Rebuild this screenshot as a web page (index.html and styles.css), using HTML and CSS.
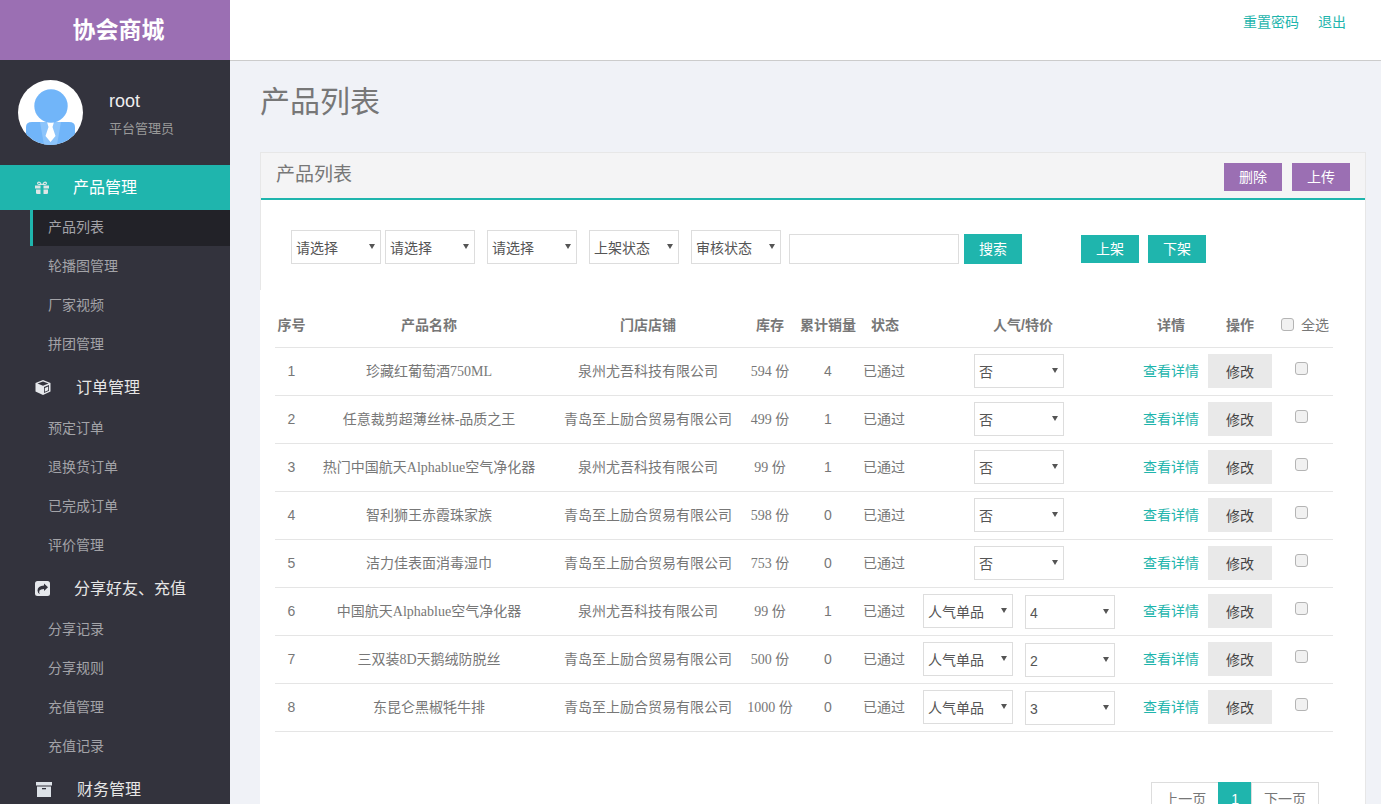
FILE: index.html
```html
<!DOCTYPE html>
<html lang="zh-CN">
<head>
    <meta charset="UTF-8">
    <title>产品列表</title>
    <link rel="stylesheet" href="styles.css">
</head>
<body>
    <div class="app">
        <!-- Sidebar -->
        <div class="sidebar">
            <div class="logo">协会商城</div>
            <div class="profile">
                <svg class="avatar" viewBox="0 0 65 65">
                    <defs><clipPath id="round"><circle cx="32.5" cy="32.5" r="32.5"/></clipPath></defs>
                    <circle cx="32.5" cy="32.5" r="32.5" fill="#fff"/>
                    <g clip-path="url(#round)">
                        <path d="M8 47q0-5 6-5h37q6 0 6 5v18H8z" fill="#71b5f9"/>
                        <path d="M22 42h21l-4 23H26z" fill="#8cc4fb"/>
                        <path d="M29 42h7l-1.500 5 3 9-5 6-5-6 3-9z" fill="#fff"/>
                    </g>
                    <circle cx="33" cy="26" r="16.700" fill="#71b5f9"/>
                </svg>
                <div class="profile-info">
                    <div class="profile-name">root</div>
                    <div class="profile-role">平台管理员</div>
                </div>
            </div>
            <ul class="menu">
                <li class="menu-head active">
                    <svg class="icon icon-gift" viewBox="0 0 14 14"><path d="M0 4.500h14v3H8.500v-3h-3v3H0zM1 8.500h4.500V13H2.500Q1 13 1 12zM8.500 8.500H13V12q0 1-1.500 1h-3zM4 .5q-2 0-2 1.700T4 4h6q2 0 2-1.800T10 .5Q8.500.5 7 3.500 5.500.5 4 .5z" fill="#dfe6e6" fill-rule="evenodd"/><path d="M4 1.800q-.8 0-.8.6t.8.6h1.500zM10 1.800q.8 0 .8.6t-.8.6H8.500z" fill="#1fb5ad"/></svg>
                    <span>产品管理</span>
                </li>
                <li class="menu-item current">产品列表</li>
                <li class="menu-item">轮播图管理</li>
                <li class="menu-item">厂家视频</li>
                <li class="menu-item tight">拼团管理</li>
                <li class="menu-head">
                    <svg class="icon icon-cube" viewBox="0 0 16 15"><path d="M8 0l7.500 3v8.500L8 15 .5 11.500V3z" fill="#e6e8ec"/><path d="M2.500 3.600L8 1.500l5.500 2.100L8 5.800zM9 7v6l5-2.300V5z" fill="#33333d"/><path d="M9.800 8l3.400-1.500v3.700l-3.400 1.600z" fill="#e6e8ec"/></svg>
                    <span>订单管理</span>
                </li>
                <li class="menu-item">预定订单</li>
                <li class="menu-item">退换货订单</li>
                <li class="menu-item">已完成订单</li>
                <li class="menu-item">评价管理</li>
                <li class="menu-head">
                    <svg class="icon icon-share" viewBox="0 0 15 15"><path d="M2.500 0h10Q15 0 15 2.500v10q0 2.500-2.500 2.500h-10Q0 15 0 12.500v-10Q0 0 2.500 0z" fill="#e6e8ec"/><path d="M9 2.500l4 3.700-4 3.800V8Q5.500 8 4.500 9.500 3.500 11.500 5 13 2.500 12 2.500 9.500q0-4.500 6.500-5z" fill="#33333d"/></svg>
                    <span>分享好友、充值</span>
                </li>
                <li class="menu-item">分享记录</li>
                <li class="menu-item">分享规则</li>
                <li class="menu-item">充值管理</li>
                <li class="menu-item">充值记录</li>
                <li class="menu-head">
                    <svg class="icon icon-archive" viewBox="0 0 16 15"><path d="M0 0h16v3.500H0zM1 4.500h14V15H1z" fill="#dde2e8"/><rect x="6" y="6" width="4" height="1.300" fill="#33333d"/></svg>
                    <span>财务管理</span>
                </li>
            </ul>
        </div>

        <!-- Main Content -->
        <div class="main">
            <div class="topbar">
                <a href="#">重置密码</a>
                <a href="#">退出</a>
            </div>
            <div class="content">
                <h1 class="page-title">产品列表</h1>
                <div class="panel">
                    <div class="panel-head">
                        <h2>产品列表</h2>
                        <div class="panel-actions">
                            <button class="btn btn-purple">删除</button>
                            <button class="btn btn-purple">上传</button>
                        </div>
                    </div>
                    <div class="filters">
                        <select class="field"><option>请选择</option></select>
                        <select class="field gap-s"><option>请选择</option></select>
                        <select class="field gap-m"><option>请选择</option></select>
                        <select class="field gap-m"><option>上架状态</option></select>
                        <select class="field gap-m"><option>审核状态</option></select>
                        <input type="text" class="search-input">
                        <button class="btn btn-teal btn-search">搜索</button>
                        <button class="btn btn-teal btn-on">上架</button>
                        <button class="btn btn-teal btn-off">下架</button>
                    </div>
                    <div class="table-wrap">
                        <table>
                            <colgroup>
                                <col class="c-no"><col class="c-name"><col class="c-shop"><col class="c-stock"><col class="c-sales"><col class="c-state"><col class="c-hot"><col class="c-detail"><col class="c-op"><col class="c-check">
                            </colgroup>
                            <thead>
                                <tr>
                                    <th>序号</th>
                                    <th>产品名称</th>
                                    <th>门店店铺</th>
                                    <th>库存</th>
                                    <th>累计销量</th>
                                    <th>状态</th>
                                    <th>人气/特价</th>
                                    <th>详情</th>
                                    <th>操作</th>
                                    <th class="check-all"><input type="checkbox"><span>全选</span></th>
                                </tr>
                            </thead>
                            <tbody>
                                <tr>
                                    <td>1</td><td>珍藏红葡萄酒750ML</td><td>泉州尤吾科技有限公司</td><td>594 份</td><td>4</td><td>已通过</td>
                                    <td><div class="hot-pair"><select class="field"><option>否</option></select></div></td>
                                    <td><a href="#">查看详情</a></td><td><button class="btn btn-edit">修改</button></td><td class="row-check"><input type="checkbox"></td>
                                </tr>
                                <tr>
                                    <td>2</td><td>任意裁剪超薄丝袜-品质之王</td><td>青岛至上励合贸易有限公司</td><td>499 份</td><td>1</td><td>已通过</td>
                                    <td><div class="hot-pair"><select class="field"><option>否</option></select></div></td>
                                    <td><a href="#">查看详情</a></td><td><button class="btn btn-edit">修改</button></td><td class="row-check"><input type="checkbox"></td>
                                </tr>
                                <tr>
                                    <td>3</td><td>热门中国航天Alphablue空气净化器</td><td>泉州尤吾科技有限公司</td><td>99 份</td><td>1</td><td>已通过</td>
                                    <td><div class="hot-pair"><select class="field"><option>否</option></select></div></td>
                                    <td><a href="#">查看详情</a></td><td><button class="btn btn-edit">修改</button></td><td class="row-check"><input type="checkbox"></td>
                                </tr>
                                <tr>
                                    <td>4</td><td>智利狮王赤霞珠家族</td><td>青岛至上励合贸易有限公司</td><td>598 份</td><td>0</td><td>已通过</td>
                                    <td><div class="hot-pair"><select class="field"><option>否</option></select></div></td>
                                    <td><a href="#">查看详情</a></td><td><button class="btn btn-edit">修改</button></td><td class="row-check"><input type="checkbox"></td>
                                </tr>
                                <tr>
                                    <td>5</td><td>洁力佳表面消毒湿巾</td><td>青岛至上励合贸易有限公司</td><td>753 份</td><td>0</td><td>已通过</td>
                                    <td><div class="hot-pair"><select class="field"><option>否</option></select></div></td>
                                    <td><a href="#">查看详情</a></td><td><button class="btn btn-edit">修改</button></td><td class="row-check"><input type="checkbox"></td>
                                </tr>
                                <tr>
                                    <td>6</td><td>中国航天Alphablue空气净化器</td><td>泉州尤吾科技有限公司</td><td>99 份</td><td>1</td><td>已通过</td>
                                    <td><div class="hot-pair"><select class="field"><option>人气单品</option></select><select class="field field-low"><option>4</option></select></div></td>
                                    <td><a href="#">查看详情</a></td><td><button class="btn btn-edit">修改</button></td><td class="row-check"><input type="checkbox"></td>
                                </tr>
                                <tr>
                                    <td>7</td><td>三双装8D天鹅绒防脱丝</td><td>青岛至上励合贸易有限公司</td><td>500 份</td><td>0</td><td>已通过</td>
                                    <td><div class="hot-pair"><select class="field"><option>人气单品</option></select><select class="field field-low"><option>2</option></select></div></td>
                                    <td><a href="#">查看详情</a></td><td><button class="btn btn-edit">修改</button></td><td class="row-check"><input type="checkbox"></td>
                                </tr>
                                <tr>
                                    <td>8</td><td>东昆仑黑椒牦牛排</td><td>青岛至上励合贸易有限公司</td><td>1000 份</td><td>0</td><td>已通过</td>
                                    <td><div class="hot-pair"><select class="field"><option>人气单品</option></select><select class="field field-low"><option>3</option></select></div></td>
                                    <td><a href="#">查看详情</a></td><td><button class="btn btn-edit">修改</button></td><td class="row-check"><input type="checkbox"></td>
                                </tr>
                            </tbody>
                        </table>
                        <div class="pager">
                            <a href="#">上一页</a>
                            <a href="#" class="on">1</a>
                            <a href="#">下一页</a>
                        </div>
                    </div>
                </div>
            </div>
        </div>
    </div>
</body>
</html>
```

FILE: styles.css
```css
* {
    margin: 0;
    padding: 0;
    box-sizing: border-box;
}

html, body {
    height: 804px;
    overflow: hidden;
}

body {
    background-color: #f0f2f7;
    color: #777;
    font-family: "Liberation Sans", "Noto Sans CJK SC", sans-serif;
    font-size: 14px;
}

a {
    color: #1fb5ad;
    text-decoration: none;
}

.app {
    display: flex;
    height: 804px;
}

/* Sidebar */
.sidebar {
    width: 230px;
    flex-shrink: 0;
    background-color: #33333d;
    overflow: hidden;
}

.logo {
    height: 60px;
    padding-left: 7px;
    line-height: 60px;
    background-color: #9b6fb3;
    color: #fff;
    font-size: 23px;
    font-weight: 700;
    text-align: center;
}

.profile {
    display: flex;
    height: 105px;
    padding: 20px 0 0 18px;
}

.avatar {
    width: 65px;
    height: 65px;
}

.profile-info {
    margin-left: 26px;
}

.profile-name {
    margin-top: 9px;
    color: #eee;
    font-size: 18px;
    line-height: 24px;
}

.profile-role {
    margin-top: 7px;
    color: #999;
    font-size: 13px;
    line-height: 18px;
}

.menu {
    list-style: none;
}

.menu-head {
    display: flex;
    align-items: center;
    height: 45px;
    padding-left: 35px;
    color: #e6e6e6;
    font-size: 16px;
}

.menu-head span {
    padding-bottom: 4px;
}

.menu-head.active {
    background-color: #1fb5ad;
    color: #fff;
}

.icon {
    flex-shrink: 0;
    margin-right: 24px;
}

.icon-gift { width: 14px; height: 14px; }
.icon-cube { width: 16px; height: 15px; margin-right: 25px; }
.icon-share { width: 15px; height: 15px; }
.icon-archive { width: 16px; height: 15px; margin-left: 1px; margin-right: 25px; }

.menu-item {
    height: 36px;
    line-height: 34px;
    margin-bottom: 3px;
    padding-left: 48px;
    color: #a3a3a8;
    font-size: 14px;
}

.menu-head ~ .menu-head ~ .menu-item {
    line-height: 36px;
}

.menu-item.tight {
    margin-bottom: 2px;
}

.menu-item.current {
    margin-left: 30px;
    padding-left: 15px;
    border-left: 3px solid #1fb5ad;
    background-color: #222228;
}

/* Main Content */
.main {
    flex: 1;
    min-width: 0;
}

.topbar {
    display: flex;
    justify-content: flex-end;
    gap: 19px;
    height: 61px;
    padding: 13px 35px 0 0;
    background-color: #fff;
    border-bottom: 1px solid #ccc;
    line-height: 18px;
}

.content {
    padding: 0 15px 0 30px;
}

.page-title {
    height: 91px;
    padding-top: 20px;
    color: #777;
    font-size: 30px;
    font-weight: 400;
    line-height: 42px;
}

.panel {
    background-color: #fff;
    border: 1px solid #e7e7e7;
    border-bottom: none;
}

.panel-head {
    display: flex;
    justify-content: space-between;
    height: 47px;
    padding: 10px 15px 0;
    background-color: #f4f4f5;
    border-bottom: 2px solid #1fb5ad;
}

.panel-head h2 {
    color: #777;
    font-size: 19px;
    font-weight: 400;
    line-height: 24px;
}

.panel-actions {
    display: flex;
    align-items: flex-start;
    gap: 10px;
}

.btn {
    width: 58px;
    height: 28px;
    border: none;
    color: #fff;
    font-family: inherit;
    font-size: 14px;
    cursor: pointer;
}

.btn-purple {
    padding-bottom: 2px;
    background-color: #9b6fb3;
}

.btn-teal {
    padding-bottom: 2px;
    background-color: #1fb5ad;
}

/* Filters */
.filters {
    display: flex;
    align-items: flex-end;
    height: 90px;
    padding: 30px 0 26px 30px;
}

/* select with the small solid arrow of the original */
.field {
    appearance: none;
    width: 90px;
    height: 34px;
    padding: 2px 0 0 4px;
    border: 1px solid #ddd;
    border-radius: 0;
    background: #fff url("data:image/svg+xml,%3Csvg xmlns='http://www.w3.org/2000/svg' width='6' height='5'%3E%3Cpath d='M0 0h6L3 5z' fill='%23555'/%3E%3C/svg%3E") no-repeat 77px 13px;
    color: #555;
    font-family: inherit;
    font-size: 14px;
}

.gap-s { margin-left: 4px; }
.gap-m { margin-left: 12px; }

.search-input {
    width: 170px;
    height: 30px;
    margin-left: 8px;
    border: 1px solid #ddd;
}

.btn-search {
    height: 30px;
    margin-left: 5px;
}

.btn-on {
    margin: 0 0 1px 59px;
}

.btn-off {
    margin: 0 0 1px 9px;
}

/* Table */
.table-wrap {
    margin-left: -1px;
    padding: 9px 32px 0 15px;
    background-color: #fff;
}

table {
    width: 1058px;
    table-layout: fixed;
    border-collapse: collapse;
}

.c-no { width: 33px; }
.c-name { width: 242px; }
.c-shop { width: 196px; }
.c-stock { width: 48px; }
.c-sales { width: 68px; }
.c-state { width: 46px; }
.c-hot { width: 230px; }
.c-detail { width: 66px; }
.c-op { width: 72px; }
.c-check { width: 57px; }

th, td {
    text-align: center;
    border-bottom: 1px solid #e5e5e5;
    white-space: nowrap;
}

th {
    height: 48px;
    padding-top: 2px;
    color: #777;
    font-size: 14px;
    font-weight: 700;
}

td {
    height: 48px;
    font-family: "Liberation Serif", "Noto Sans CJK SC", serif;
    font-size: 14px;
    color: #777;
}

td:nth-child(1),
td:nth-child(5),
td a,
td .btn,
td .field {
    font-family: "Liberation Sans", "Noto Sans CJK SC", sans-serif;
}

/* CJK text sits a little low against the digits */
td:nth-child(2),
td:nth-child(3),
td:nth-child(4),
td:nth-child(6),
td:nth-child(8) {
    padding-bottom: 2px;
}

td:nth-child(6) {
    padding-right: 2px;
}

.hot-pair {
    display: flex;
    justify-content: center;
    gap: 12px;
    padding-right: 8px;
}

.field-low {
    margin-top: 1px;
}

.btn-edit {
    display: block;
    width: 64px;
    height: 34px;
    margin: 0 auto;
    background-color: #e9e9e9;
    color: #444;
}

.check-all {
    font-weight: 400;
    text-align: left;
    padding-left: 5px;
}

.check-all span {
    margin-left: 7px;
}

.check-all input,
.row-check input {
    appearance: none;
    width: 13px;
    height: 13px;
    border: 1px solid #b4b4b4;
    border-radius: 3px;
    background-color: #f1f1f1;
    vertical-align: -1px;
}

.row-check {
    text-align: left;
    padding: 0 0 2px 19px;
}

/* Pagination */
.pager {
    display: flex;
    justify-content: flex-end;
    margin: 50px 14px 0 0;
}

.pager a {
    height: 40px;
    padding: 0 12px;
    border: 1px solid #ddd;
    margin-left: -1px;
    color: #777;
    line-height: 32px;
}

.pager a.on {
    background-color: #1fb5ad;
    border-color: #1fb5ad;
    color: #fff;
}
```
